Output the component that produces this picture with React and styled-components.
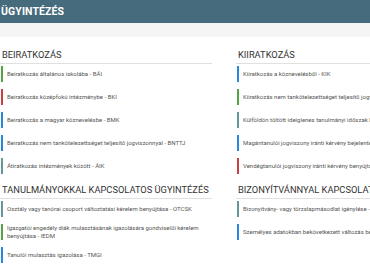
import styled, { createGlobalStyle } from 'styled-components';

const GlobalStyle = createGlobalStyle`
  body {
    margin: 0;
    background: #fff;
    font-family: Roboto, "Liberation Sans", sans-serif;
  }
`;

const colors = {
  green: '#54a344',
  red: '#cc3f41',
  blue: '#2587de',
  teal: '#64969a',
};

const Page = styled.div`
  width: 470px;
  overflow: hidden;
`;

const Header = styled.header`
  height: 23px;
  background-color: #466b7c;
  display: flex;
  align-items: center;
  padding-left: 1px;
`;

const Title = styled.h1`
  margin: 0;
  color: #fff;
  font-size: 10.5px;
  font-weight: 700;
  letter-spacing: 0.1px;
`;

const Band = styled.div`
  height: 14px;
  background-color: #f5f5f5;
`;

const Content = styled.main`
  display: grid;
  grid-template-columns: 212px 212px;
  column-gap: 24px;
  padding: 12px 0 0 0;
`;

const Column = styled.div`
  display: flex;
  flex-direction: column;
`;

const Section = styled.section`
  display: flex;
  flex-direction: column;
  margin-bottom: 3px;
`;

const Heading = styled.h2`
  margin: 0 0 2px 0;
  padding: 0 0 2px 2px;
  font-size: 9.3px;
  line-height: 12px;
  font-weight: 400;
  color: #333;
  white-space: nowrap;
  border-bottom: 1px solid #e0e0e0;
`;

const Item = styled.div`
  display: flex;
  align-items: center;
  min-height: 16px;
  margin-bottom: 7px;
  padding: 0 4px;
  margin-left: 1px;
  border-left: 2px solid ${(p) => colors[p.$color]};
  font-size: 6px;
  line-height: 8px;
  color: #555;
  white-space: ${(p) => (p.$wrap ? 'normal' : 'nowrap')};
`;

const left = [
  {
    title: 'BEIRATKOZÁS',
    items: [
      ['green', 'Beiratkozás általános iskolába - BÁI'],
      ['red', 'Beiratkozás középfokú intézménybe - BKI'],
      ['blue', 'Beiratkozás a magyar köznevelésbe - BMK'],
      ['blue', 'Beiratkozás nem tankötelezettséget teljesítő jogviszonnyal - BNTTJ'],
      ['teal', 'Átiratkozás intézmények között - ÁIK'],
    ],
  },
  {
    title: 'TANULMÁNYOKKAL KAPCSOLATOS ÜGYINTÉZÉS',
    items: [
      ['teal', 'Osztály vagy tanórai csoport változtatási kérelem benyújtása - OTCSK'],
      ['green', 'Igazgatói engedély diák mulasztásának igazolására gondviselői kérelem benyújtása - IEDM', true],
      ['blue', 'Tanulói mulasztás igazolása - TMGI'],
      ['red', 'Tanulói kérelem benyújtása - TKB'],
    ],
  },
];

const right = [
  {
    title: 'KIIRATKOZÁS',
    items: [
      ['blue', 'Kiiratkozás a köznevelésből - KIK'],
      ['green', 'Kiiratkozás nem tankötelezettséget teljesítő jogviszonyból - KNTTJ'],
      ['teal', 'Külföldön töltött ideiglenes tanulmányi időszak bejelentése - KTIT'],
      ['blue', 'Magántanulói jogviszony iránti kérvény bejelentése - MJK'],
      ['red', 'Vendégtanulói jogviszony iránti kérvény benyújtása - VJK'],
    ],
  },
  {
    title: 'BIZONYÍTVÁNNYAL KAPCSOLATOS ÜGYINTÉZÉS',
    items: [
      ['teal', 'Bizonyítvány- vagy törzslapmásodlat igénylése - BTI'],
      ['blue', 'Személyes adatokban bekövetkezett változás bejelentése - SZAV'],
    ],
  },
];

const renderColumn = (sections) =>
  sections.map((s) => (
    <Section key={s.title}>
      <Heading>{s.title}</Heading>
      {s.items.map(([color, text, wrap]) => (
        <Item key={text} $color={color} $wrap={wrap}>
          {text}
        </Item>
      ))}
    </Section>
  ));

export default function App() {
  return (
    <Page>
      <GlobalStyle />
      <Header>
        <Title>ÜGYINTÉZÉS</Title>
      </Header>
      <Band />
      <Content>
        <Column>{renderColumn(left)}</Column>
        <Column>{renderColumn(right)}</Column>
      </Content>
    </Page>
  );
}
